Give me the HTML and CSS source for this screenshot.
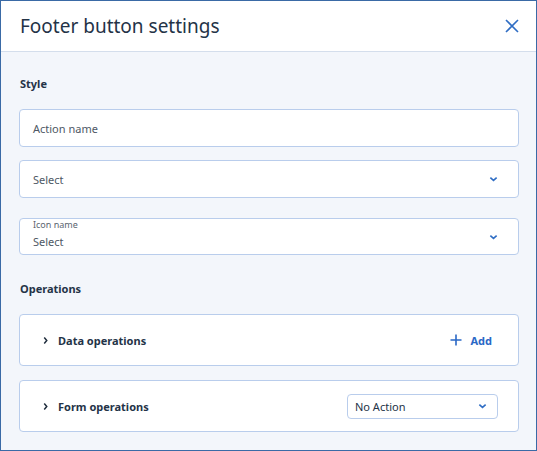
FILE: index.html
```html
<!DOCTYPE html>
<html lang="en">
<head>
    <meta charset="UTF-8">
    <meta name="viewport" content="width=device-width, initial-scale=1.0">
    <title>Footer button settings</title>
    <link rel="stylesheet" href="styles.css">
</head>
<body>
    <div class="dialog">
        <div class="header">
            <h1>Footer button settings</h1>
            <svg class="close" viewBox="0 0 14 14" fill="none" xmlns="http://www.w3.org/2000/svg">
                <path d="M1 1L13 13M13 1L1 13" stroke="#2f6dc4" stroke-width="1.6"/>
            </svg>
        </div>
        <div class="body">
            <h3>Style</h3>
            <div class="field">
                <span class="placeholder">Action name</span>
            </div>
            <div class="field select">
                <span class="placeholder">Select</span>
                <svg class="caret" viewBox="0 0 10 6" fill="none" xmlns="http://www.w3.org/2000/svg">
                    <path d="M1.5 1.5L5 4.5L8.5 1.5" stroke="#2f6dc4" stroke-width="1.8"/>
                </svg>
            </div>
            <div class="field select labelled">
                <div class="stack">
                    <span class="label">Icon name</span>
                    <span class="placeholder">Select</span>
                </div>
                <svg class="caret" viewBox="0 0 10 6" fill="none" xmlns="http://www.w3.org/2000/svg">
                    <path d="M1.5 1.5L5 4.5L8.5 1.5" stroke="#2f6dc4" stroke-width="1.8"/>
                </svg>
            </div>

            <h3 class="ops-title">Operations</h3>
            <div class="card">
                <div class="card-title">
                    <svg class="arrow" viewBox="0 0 6 10" fill="none" xmlns="http://www.w3.org/2000/svg">
                        <path d="M1.5 1.5L4.5 5L1.5 8.5" stroke="#1f2d3d" stroke-width="1.8"/>
                    </svg>
                    <span>Data operations</span>
                </div>
                <div class="add">
                    <svg viewBox="0 0 12 12" fill="none" xmlns="http://www.w3.org/2000/svg">
                        <path d="M6 0.5V11.5M0.5 6H11.5" stroke="#2a68c6" stroke-width="1.6"/>
                    </svg>
                    <span>Add</span>
                </div>
            </div>
            <div class="card">
                <div class="card-title">
                    <svg class="arrow" viewBox="0 0 6 10" fill="none" xmlns="http://www.w3.org/2000/svg">
                        <path d="M1.5 1.5L4.5 5L1.5 8.5" stroke="#1f2d3d" stroke-width="1.8"/>
                    </svg>
                    <span>Form operations</span>
                </div>
                <div class="mini-select">
                    <span>No Action</span>
                    <svg class="caret" viewBox="0 0 10 6" fill="none" xmlns="http://www.w3.org/2000/svg">
                        <path d="M1.5 1.5L5 4.5L8.5 1.5" stroke="#2f6dc4" stroke-width="1.8"/>
                    </svg>
                </div>
            </div>
        </div>
    </div>
</body>
</html>
```

FILE: styles.css
```css
* {
    box-sizing: border-box;
}
body {
    margin: 0;
    padding: 0;
    font-family: 'Noto Sans', 'Open Sans', sans-serif;
    color: #243347;
}
.dialog {
    width: 537px;
    height: 451px;
    border: 1px solid #3a6aa6;
    background: #f3f6fb;
    display: flex;
    flex-direction: column;
}
.header {
    height: 51px;
    flex: none;
    background: #fff;
    border-bottom: 1px solid #d4deec;
    display: flex;
    align-items: center;
    justify-content: space-between;
    padding: 0 17px 0 19px;
}
.header h1 {
    margin: 0;
    font-size: 19px;
    font-weight: 400;
    color: #243347;
}
.close {
    width: 14px;
    height: 14px;
}
.body {
    padding: 24px 17px 0 18px;
    display: flex;
    flex-direction: column;
}
.body h3 {
    margin: 0 0 17px 1px;
    font-size: 11px;
    font-weight: 700;
    line-height: 16px;
}
.field {
    height: 38px;
    background: #fff;
    border: 1px solid #b9cdec;
    border-radius: 4px;
    display: flex;
    align-items: center;
    justify-content: space-between;
    padding: 0 20px 0 13px;
    margin-bottom: 13px;
}
.field.labelled {
    margin-top: 7px;
    height: 37px;
}
.placeholder {
    font-size: 11px;
    color: #4e5865;
}
.stack {
    display: flex;
    flex-direction: column;
    line-height: 16px;
    margin-top: -2px;
}
.stack .placeholder {
    margin-top: 3px;
}
.label {
    font-size: 9px;
    color: #5b6570;
    line-height: 12px;
    margin-top: -3px;
}
.caret {
    width: 9px;
    height: 6px;
}
.body h3.ops-title {
    margin-top: 13px;
    margin-bottom: 17px;
}
.card {
    height: 52px;
    background: #fff;
    border: 1px solid #b9cdec;
    border-radius: 4px;
    display: flex;
    align-items: center;
    justify-content: space-between;
    padding: 0 26px 0 23px;
    margin-bottom: 14px;
}
.card-title {
    display: flex;
    align-items: center;
    gap: 10px;
    font-size: 11px;
    font-weight: 700;
}
.arrow {
    width: 5px;
    height: 9px;
}
.add {
    display: flex;
    align-items: center;
    gap: 8px;
    color: #2a68c6;
    font-size: 11px;
    font-weight: 700;
}
.add svg {
    width: 12px;
    height: 12px;
}
.mini-select {
    width: 151px;
    height: 25px;
    border: 1px solid #b9cdec;
    border-radius: 4px;
    display: flex;
    align-items: center;
    justify-content: space-between;
    padding: 0 10px 0 7px;
    font-size: 11px;
    color: #243347;
    margin-right: -6px;
}
```
